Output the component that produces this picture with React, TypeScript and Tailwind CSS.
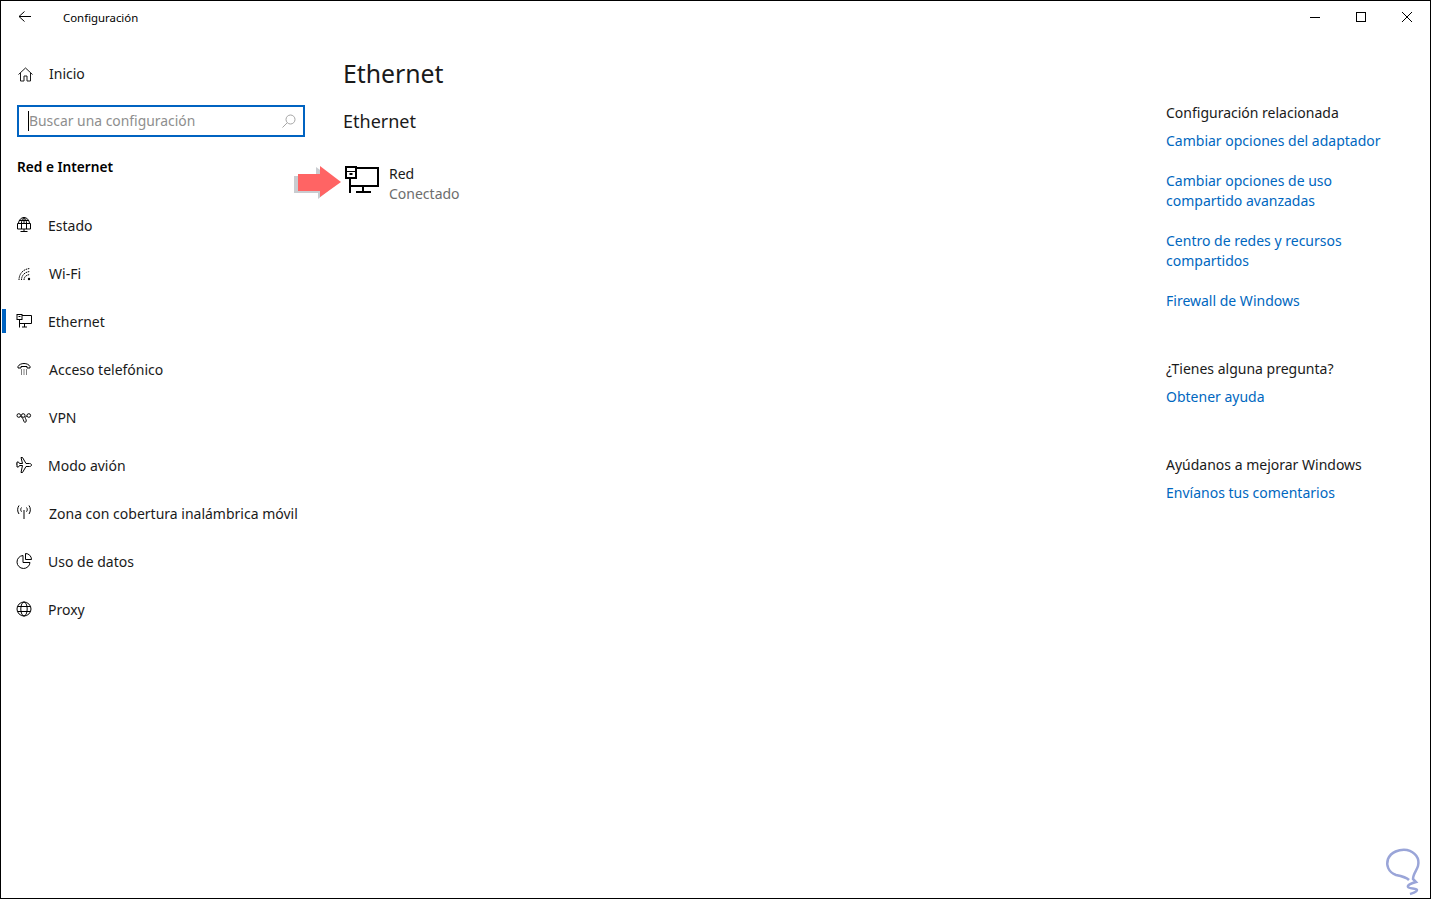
import type { ReactNode } from 'react';

const stroke = { fill: 'none', stroke: 'currentColor', strokeWidth: 1 } as const;

function Icon({ children }: { children: ReactNode }) {
  return (
    <svg width="16" height="16" viewBox="0 0 16 16" {...stroke}>
      {children}
    </svg>
  );
}

const navItems: { label: string; pad: string; active?: boolean; icon: ReactNode }[] = [
  {
    label: 'Estado',
    pad: 'pl-[15px] gap-[15px]',
    icon: (
      <Icon>
        <path d="M2.500 6C3 3 5 .5 8 .5S13 3 13.500 6M5.500 6c0-2.500 1-4.500 2.500-5.500C9.500 1.500 10.500 3.500 10.500 6M8 .5V6M3 3.500h10" />
        <path d="M1.500 6.500h13v5.500h-13zM8 12v2.500M4.500 14.500h7M5.500 6.500V12M10.500 6.500V12" />
      </Icon>
    ),
  },
  {
    label: 'Wi-Fi',
    pad: 'pl-[15px] gap-[16px]',
    icon: (
      <Icon>
        <path d="M3 15C3 9 7 4 14 3.500M5.500 15C5.500 10.500 8.500 7 14 6.500M8 15c0-3 2-5 6-5.500" strokeDasharray="1.500 .7" />
        <circle cx="13" cy="14" r="1.200" fill="currentColor" stroke="none" />
      </Icon>
    ),
  },
  {
    label: 'Ethernet',
    pad: 'pl-[15px] gap-[15px]',
    active: true,
    icon: (
      <Icon>
        <path d="M3.500 2.500h12v8h-12M3.500 6.500v8M3.500 10.500h9M8.500 10.500v3.500M6 14h5" />
        <rect x="1" y="1.500" width="5" height="5" fill="white" />
        <path d="M2.500 3.500h2" />
      </Icon>
    ),
  },
  {
    label: 'Acceso telefónico',
    pad: 'pl-[15px] gap-[16px]',
    icon: (
      <Icon>
        <path d="M2 7V5.500C4 1.500 12 1.500 14 5.500V7h-3V5.500H5V7z" />
        <path d="M5 9h1M7.500 9h1M10 9h1M5 11h1M7.500 11h1M10 11h1M5 13h1M7.500 13h1M10 13h1" />
      </Icon>
    ),
  },
  {
    label: 'VPN',
    pad: 'pl-[15px] gap-[16px]',
    icon: (
      <Icon>
        <circle cx="2.800" cy="6.500" r="1.800" />
        <circle cx="7.200" cy="6.500" r="1.800" />
        <circle cx="12.800" cy="6.500" r="1.800" />
        <path d="M4.500 7.500c2 .5 2.500 2.500 3.500 5s3.500-.5 1.500-3c-1-1.200 0-2 1.500-2.500" />
      </Icon>
    ),
  },
  {
    label: 'Modo avión',
    pad: 'pl-[15px] gap-[15px]',
    icon: (
      <Icon>
        <path d="M15.500 8c0-1-1-1.500-2-1.500H10L6.500.500H5l1.500 6h-3l-1-1.500H1v2H.5h.5V10h1.500l1-1.500h3L5 15.500h1.500l3.500-6h3.500c1 0 2-.500 2-1.500z" />
      </Icon>
    ),
  },
  {
    label: 'Zona con cobertura inalámbrica móvil',
    pad: 'pl-[15px] gap-[16px]',
    icon: (
      <Icon>
        <path d="M8 5v9" />
        <path d="M5.500 2.500c-1 1.200-1 3 0 4.200M3 .5c-1.800 2.500-1.800 6 0 8.500M10.500 2.500c1 1.200 1 3 0 4.200M13 .5c1.800 2.500 1.800 6 0 8.500" />
      </Icon>
    ),
  },
  {
    label: 'Uso de datos',
    pad: 'pl-[15px] gap-[15px]',
    icon: (
      <Icon>
        <path d="M7 2.500a6.500 6.500 0 1 0 7 7H7z" />
        <path d="M9.500 .5a6 6 0 0 1 6 6h-6z" />
      </Icon>
    ),
  },
  {
    label: 'Proxy',
    pad: 'pl-[15px] gap-[15px]',
    icon: (
      <Icon>
        <circle cx="8" cy="8" r="7" />
        <ellipse cx="8" cy="8" rx="3.200" ry="7" />
        <path d="M1.500 5.500h13M1.500 10.500h13" />
      </Icon>
    ),
  },
];

const helpGroups = [
  {
    title: 'Configuración relacionada',
    links: [
      ['Cambiar opciones del adaptador'],
      ['Cambiar opciones de uso', 'compartido avanzadas'],
      ['Centro de redes y recursos', 'compartidos'],
      ['Firewall de Windows'],
    ],
  },
  { title: '¿Tienes alguna pregunta?', links: [['Obtener ayuda']] },
  { title: 'Ayúdanos a mejorar Windows', links: [['Envíanos tus comentarios']] },
];

export default function App() {
  return (
    <div className="relative w-[1431px] h-[899px] overflow-hidden bg-white border border-black text-[14px] leading-5 text-[#1a1a1a] font-['Noto_Sans','Open_Sans',sans-serif] flex flex-col">
      {/* Title bar */}
      <div className="flex items-center h-[32px] shrink-0 text-black">
        <svg className="ml-[17px]" width="13" height="12" viewBox="0 0 13 12" {...stroke}>
          <path d="M13 5.500H1M6.500 .5l-5.500 5 5.500 5" />
        </svg>
        <span className="ml-[32px] mt-[1px] text-[11.4px]">Configuración</span>
        <div className="ml-auto flex items-center text-black">
          <svg className="mr-[33px]" width="14" height="14" viewBox="0 0 14 14" {...stroke}>
            <path d="M2 7.500h10" />
          </svg>
          <svg className="mr-[34px]" width="12" height="12" viewBox="0 0 12 12" {...stroke}>
            <rect x="1.500" y="1.500" width="9" height="9" />
          </svg>
          <svg className="mr-[17px]" width="12" height="12" viewBox="0 0 12 12" {...stroke}>
            <path d="M1 1l10 10M11 1L1 11" />
          </svg>
        </div>
      </div>

      <div className="flex flex-1 min-h-0">
        {/* Sidebar */}
        <aside className="w-[320px] shrink-0 flex flex-col">
          <div className="flex items-center h-[48px] mt-[17px] pl-[17px] gap-[16px]">
            <svg width="15" height="15" viewBox="0 0 15 15" {...stroke}>
              <path d="M.5 7.500L7.500 1l7 6.500M2.500 6v8h3.500V9h3v5h3.500V6" />
            </svg>
            <span>Inicio</span>
          </div>
          <div className="mx-[16px] mt-[7px] h-[32px] border-2 border-[#0063c1] flex items-center relative">
            <span className="w-px h-[20px] bg-black ml-[9px]" />
            <span className="text-[#8e8e8e] text-[13.9px]">Buscar una configuración</span>
            <svg className="absolute right-[7px] top-[7px] text-[#a5a5a5]" width="14" height="14" viewBox="0 0 14 14" {...stroke}>
              <circle cx="8.500" cy="5.500" r="4.500" />
              <path d="M5.200 8.800L.5 13.500" />
            </svg>
          </div>
          <div className="mt-[20px] pl-[16px] font-semibold text-black text-[13.7px] h-[20px]">Red e Internet</div>
          <nav className="mt-[24px] flex flex-col">
            {navItems.map((item) => (
              <div key={item.label} className={`relative flex items-center h-[48px] ${item.pad}`}>
                {item.active && <span className="absolute left-[1px] top-[12px] w-[4px] h-[24px] bg-[#0063c1]" />}
                <span className="text-black flex"><span className="flex w-[17px]">{item.icon}</span></span>
                <span className="mt-[2px]">{item.label}</span>
              </div>
            ))}
          </nav>
        </aside>

        {/* Main */}
        <main className="flex-1 pl-[22px]">
          <h1 className="mt-[22px] text-[24.8px] leading-9 font-normal">Ethernet</h1>
          <h2 className="mt-[16px] text-[18px] leading-7 font-normal">Ethernet</h2>
          <div className="mt-[28px] flex items-start gap-[8px]">
            <svg className="text-black mt-[2px] ml-[2px]" width="36" height="30" viewBox="0 0 36 30" fill="none" stroke="currentColor" strokeWidth="2">
              <path d="M11 3h22v18H5M5 13v15M18 21v5M11 27h15" />
              <rect x="1" y="2" width="10" height="11" fill="white" />
              <path d="M1 6.500h10" strokeWidth="1" />
              <path d="M4.500 9h3" />
            </svg>
            <div className="mt-[1px]">
              <div>Red</div>
              <div className="text-[#6d6d6d]">Conectado</div>
            </div>
          </div>
        </main>

        {/* Related settings */}
        <aside className="w-[264px] shrink-0 pt-[70px]">
          {helpGroups.map((group) => (
            <div key={group.title} className="mb-[48px]">
              <div className="h-[20px]">{group.title}</div>
              <div className="mt-[8px] flex flex-col gap-[20px]">
                {group.links.map((lines) => (
                  <a key={lines[0]} className="text-[#0067c0]">
                    {lines.map((line) => (
                      <div key={line}>{line}</div>
                    ))}
                  </a>
                ))}
              </div>
            </div>
          ))}
        </aside>
      </div>

      {/* Red arrow annotation */}
      <svg className="absolute left-[291px] top-[162px]" width="50" height="38" viewBox="0 0 50 38">
        <path d="M2 13h22V4l22 16-20 16v-6H2z" fill="#c9ccd0" />
        <path d="M6 11h22V3l21 16-21 15v-6H6z" fill="#ff6464" />
      </svg>

      {/* Watermark */}
      <svg className="absolute right-[3px] bottom-[1px]" width="44" height="50" viewBox="0 0 44 50" fill="none" stroke="#9aa5d8" strokeWidth="2.500">
        <path d="M26 33c-2-2-8-4-13-5C5 25 3 18 5 12 8 5 16 2 24 3c8 2 13 8 11 16-1 4-5 8-5 13l3 3c-4 1-9 3-8 5s9 1 9 3-4 3-7 4" />
      </svg>
    </div>
  );
}
